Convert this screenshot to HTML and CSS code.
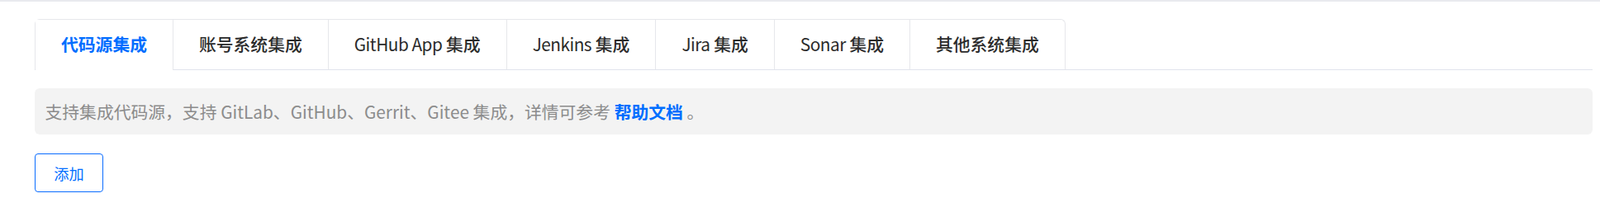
FILE: index.html
```html
<!DOCTYPE html>
<html lang="zh-CN">
<head>
<meta charset="utf-8">
<title>集成</title>
<link rel="stylesheet" href="styles.css">
</head>
<body>
<div class="page">
  <div class="tabs-row">
    <div class="tabs">
      <div class="tab active">代码源集成</div>
      <div class="tab">账号系统集成</div>
      <div class="tab"><span class="en">GitHub App</span> 集成</div>
      <div class="tab"><span class="en">Jenkins</span> 集成</div>
      <div class="tab"><span class="en">Jira</span> 集成</div>
      <div class="tab"><span class="en">Sonar</span> 集成</div>
      <div class="tab">其他系统集成</div>
    </div>
  </div>
  <div class="notice">支持集成代码源，支持 GitLab、GitHub、Gerrit、Gitee 集成，详情可参考 <a class="link">帮助文档</a> 。</div>
  <button class="btn">添加</button>
</div>
</body>
</html>
```
FILE: styles.css
```css
html, body {
  margin: 0;
  padding: 0;
  background: #fff;
}
body {
  border-top: 2px solid #e9eaee;
  font-family: "Noto Sans CJK SC", "Noto Sans", sans-serif;
}
.page {
  padding: 21px 9px 0 42px;
}
.tabs-row {
  display: flex;
  border-bottom: 1px solid #e1e4ec;
  height: 61px;
}
.tabs {
  display: flex;
  border: 1px solid #e6e7eb;
  border-bottom: none;
  border-radius: 6px 6px 0 0;
  background: #fff;
}
.tab {
  padding: 0 31px;
  font-size: 20.8px;
  font-weight: 500;
  line-height: 58px;
  color: #2b2b2b;
  border-right: 1px solid #e6e7eb;
  white-space: nowrap;
}
.tab .en {
  font-weight: 400;
  letter-spacing: -0.5px;
}
.tab:last-child {
  border-right: none;
}
.tab.active {
  color: #006eff;
  font-weight: 700;
  height: 61px;
  background: #fff;
  position: relative;
  z-index: 1;
}
.notice {
  margin-top: 22px;
  height: 56px;
  line-height: 56px;
  padding: 0 12.5px;
  background: #f3f3f3;
  border-radius: 6px;
  font-size: 20.8px;
  color: #8c8c8c;
}
.link {
  color: #006eff;
  font-weight: 700;
}
.btn {
  display: block;
  margin-top: 23px;
  width: 83px;
  height: 47px;
  padding: 0;
  border: 1px solid #0a6cff;
  border-radius: 4px;
  background: #fff;
  color: #006eff;
  font-family: inherit;
  font-size: 18.2px;
}
```
